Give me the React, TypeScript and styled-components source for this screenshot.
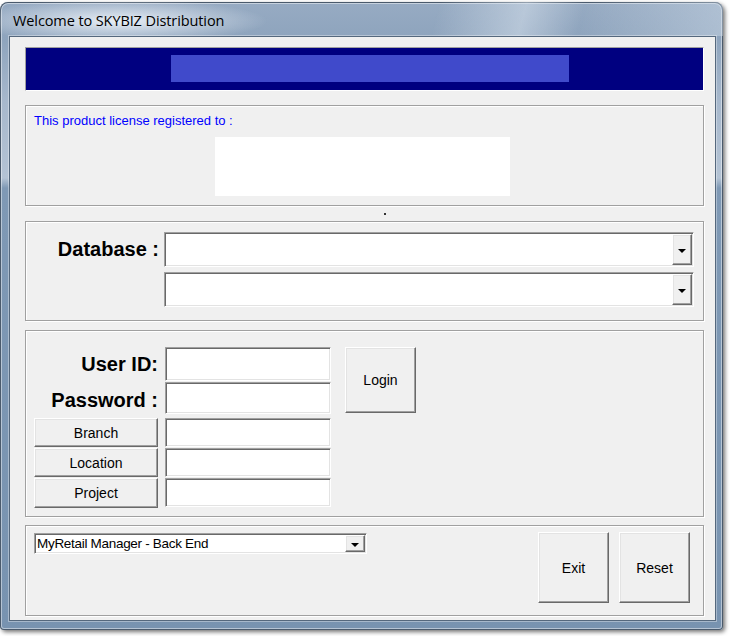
import React from "react";
import styled, { createGlobalStyle } from "styled-components";

const GlobalStyle = createGlobalStyle`
  html, body {
    margin: 0;
    padding: 0;
    background: #fff;
  }
  body {
    font-family: "Liberation Sans", Arial, sans-serif;
  }
`;

const Page = styled.div`
  width: 744px;
  height: 636px;
  padding-top: 2px;
  box-sizing: border-box;
`;

const Window = styled.div`
  width: 723px;
  height: 628px;
  display: flex;
  flex-direction: column;
  border-radius: 8px 8px 4px 4px;
  background: linear-gradient(
    180deg,
    #97abc3 0px,
    #8ea4bd 36px,
    #a7b8cc 100px,
    #b4c3d4 176px,
    #7f99b5 186px,
    #7893b0 100%
  );
  box-shadow: inset 0 0 0 1px #4a5a6c, inset 0 0 0 2px rgba(255, 255, 255, 0.45),
    2px 2px 4px rgba(0, 0, 0, 0.55);
`;

const TitleBar = styled.div`
  height: 34px;
  display: flex;
  align-items: center;
  padding: 2px 0 0 13px;
  box-sizing: border-box;
  border-radius: 8px 8px 0 0;
  background: radial-gradient(ellipse 150px 22px at 118px 19px, rgba(236, 242, 248, 0.95), rgba(236, 242, 248, 0)),
    linear-gradient(105deg, rgba(255, 255, 255, 0) 60%, rgba(220, 230, 240, 0.5) 72%, rgba(255, 255, 255, 0) 80%, rgba(210, 222, 234, 0.45) 100%);
`;

const Title = styled.span`
  font-family: "Open Sans", "Noto Sans", sans-serif;
  font-size: 14.5px;
  color: #000;
  letter-spacing: -0.1px;
`;

const Client = styled.div`
  flex: 1;
  margin: 0 7px 9px 9px;
  background: #f0f0f0;
  border: 1px solid #55687d;
  box-shadow: 0 0 0 1px rgba(255, 255, 255, 0.35);
  padding: 10px 11px 0 15px;
  display: flex;
  flex-direction: column;
`;

const Banner = styled.div`
  height: 44px;
  box-sizing: border-box;
  background: #000080;
  border: 1px solid;
  border-color: #a0a0a0 #fff #fff #a0a0a0;
  display: flex;
  justify-content: center;
  padding: 7px 0 0 10px;
`;

const BannerBar = styled.div`
  width: 398px;
  height: 27px;
  background: #404acb;
`;

const Group = styled.div<{ $h: number; $mt: number }>`
  height: ${(p) => p.$h}px;
  margin-top: ${(p) => p.$mt}px;
  box-sizing: border-box;
  border: 1px solid #a0a0a0;
  box-shadow: 1px 1px 0 #fff, inset 1px 1px 0 #fff;
  position: relative;
`;

const LicenseGroup = styled(Group)`
  padding: 7px 0 0 8px;
  display: flex;
  flex-direction: column;
`;

const LicenseText = styled.div`
  font-size: 13px;
  color: #0000ff;
`;

const LicenseBox = styled.div`
  width: 295px;
  height: 59px;
  background: #fff;
  margin: 9px 0 0 181px;
`;

const Dot = styled.div`
  position: absolute;
  left: 358px;
  bottom: -10px;
  width: 2px;
  height: 2px;
  background: #333;
`;

const DbGroup = styled(Group)`
  display: grid;
  grid-template-columns: 133px 1fr;
  grid-template-rows: 35px 35px;
  column-gap: 5px;
  row-gap: 5px;
  padding: 10px 9px 0 0;
`;

const BigLabel = styled.div`
  grid-column: 1;
  font-size: 20px;
  font-weight: bold;
  color: #000;
  text-align: right;
  align-self: center;
  white-space: nowrap;
`;

const Combo = styled.div<{ $h: number }>`
  grid-column: 2;
  height: ${(p) => p.$h}px;
  box-sizing: border-box;
  background: #fff;
  border: 1px solid;
  border-color: #a0a0a0 #fff #fff #a0a0a0;
  box-shadow: inset 1px 1px 0 #696969, inset -1px -1px 0 #e3e3e3;
  display: flex;
  align-items: stretch;
  padding: 1px;
`;

const ComboText = styled.div`
  flex: 1;
  font-size: 13.5px;
  color: #000;
  display: flex;
  align-items: center;
  padding-left: 1px;
  letter-spacing: -0.3px;
`;

const DropButton = styled.div`
  width: 20px;
  box-sizing: border-box;
  background: #f0f0f0;
  border-top: 1px solid #fff;
  border-left: 1px solid #fff;
  border-right: 1px solid #696969;
  border-bottom: 1px solid #696969;
  box-shadow: inset -1px -1px 0 #a0a0a0, inset 1px 1px 0 #e3e3e3;
  display: flex;
  align-items: center;
  justify-content: center;
  padding-top: 2px;
`;

const Arrow = styled.span`
  width: 0;
  height: 0;
  border-left: 4px solid transparent;
  border-right: 4px solid transparent;
  border-top: 4px solid #000;
`;

const LoginGroup = styled(Group)`
  display: grid;
  grid-template-columns: 124px 166px 70px;
  grid-template-rows: 35px 36px 30px 30px 30px;
  column-gap: 7px;
  align-content: start;
  padding: 16px 0 0 8px;
`;

const Field = styled.div<{ $h: number }>`
  grid-column: 2;
  height: ${(p) => p.$h}px;
  box-sizing: border-box;
  background: #fff;
  border: 1px solid;
  border-color: #a0a0a0 #fff #fff #a0a0a0;
  box-shadow: inset 1px 1px 0 #696969, inset -1px -1px 0 #e3e3e3;
`;

const Button = styled.div<{ $w: number; $h: number }>`
  width: ${(p) => p.$w}px;
  height: ${(p) => p.$h}px;
  box-sizing: border-box;
  background: #f0f0f0;
  border-top: 1px solid #fff;
  border-left: 1px solid #fff;
  border-right: 1px solid #696969;
  border-bottom: 1px solid #696969;
  box-shadow: inset -1px -1px 0 #a0a0a0, inset 1px 1px 0 #e3e3e3;
  display: flex;
  align-items: center;
  justify-content: center;
  font-size: 14px;
  color: #000;
`;

const SideButton = styled(Button)`
  grid-column: 1;
`;

const LoginCell = styled.div`
  grid-column: 3;
  grid-row: 1 / span 2;
  margin-left: 7px;
`;

const BottomGroup = styled(Group)`
  display: flex;
  padding: 6px 13px 0 8px;
`;

const BottomLeft = styled.div`
  flex: 1;
  padding-top: 1px;
`;

const ButtonRow = styled.div`
  display: flex;
  gap: 10px;
`;

const BottomCombo = styled(Combo)`
  width: 333px;
`;

const App: React.FC = () => {
  return (
    <Page>
      <GlobalStyle />
      <Window>
        <TitleBar>
          <Title>Welcome to SKYBIZ Distribution</Title>
        </TitleBar>
        <Client>
          <Banner>
            <BannerBar />
          </Banner>

          <LicenseGroup $h={101} $mt={14}>
            <LicenseText>This product license registered to :</LicenseText>
            <LicenseBox />
            <Dot />
          </LicenseGroup>

          <DbGroup $h={100} $mt={15}>
            <BigLabel>Database :</BigLabel>
            <Combo $h={35}>
              <ComboText />
              <DropButton>
                <Arrow />
              </DropButton>
            </Combo>
            <Combo $h={35}>
              <ComboText />
              <DropButton>
                <Arrow />
              </DropButton>
            </Combo>
          </DbGroup>

          <LoginGroup $h={187} $mt={9}>
            <LoginCell>
              <Button $w={71} $h={66}>Login</Button>
            </LoginCell>
            <BigLabel>User ID:</BigLabel>
            <Field $h={34} />
            <BigLabel>Password :</BigLabel>
            <Field $h={32} />
            <SideButton $w={124} $h={29}>Branch</SideButton>
            <Field $h={29} />
            <SideButton $w={124} $h={29}>Location</SideButton>
            <Field $h={29} />
            <SideButton $w={124} $h={30}>Project</SideButton>
            <Field $h={29} />
          </LoginGroup>

          <BottomGroup $h={91} $mt={8}>
            <BottomLeft>
              <BottomCombo $h={21}>
                <ComboText>MyRetail Manager - Back End</ComboText>
                <DropButton>
                  <Arrow />
                </DropButton>
              </BottomCombo>
            </BottomLeft>
            <ButtonRow>
              <Button $w={71} $h={71}>Exit</Button>
              <Button $w={71} $h={71}>Reset</Button>
            </ButtonRow>
          </BottomGroup>
        </Client>
      </Window>
    </Page>
  );
};

export default App;
